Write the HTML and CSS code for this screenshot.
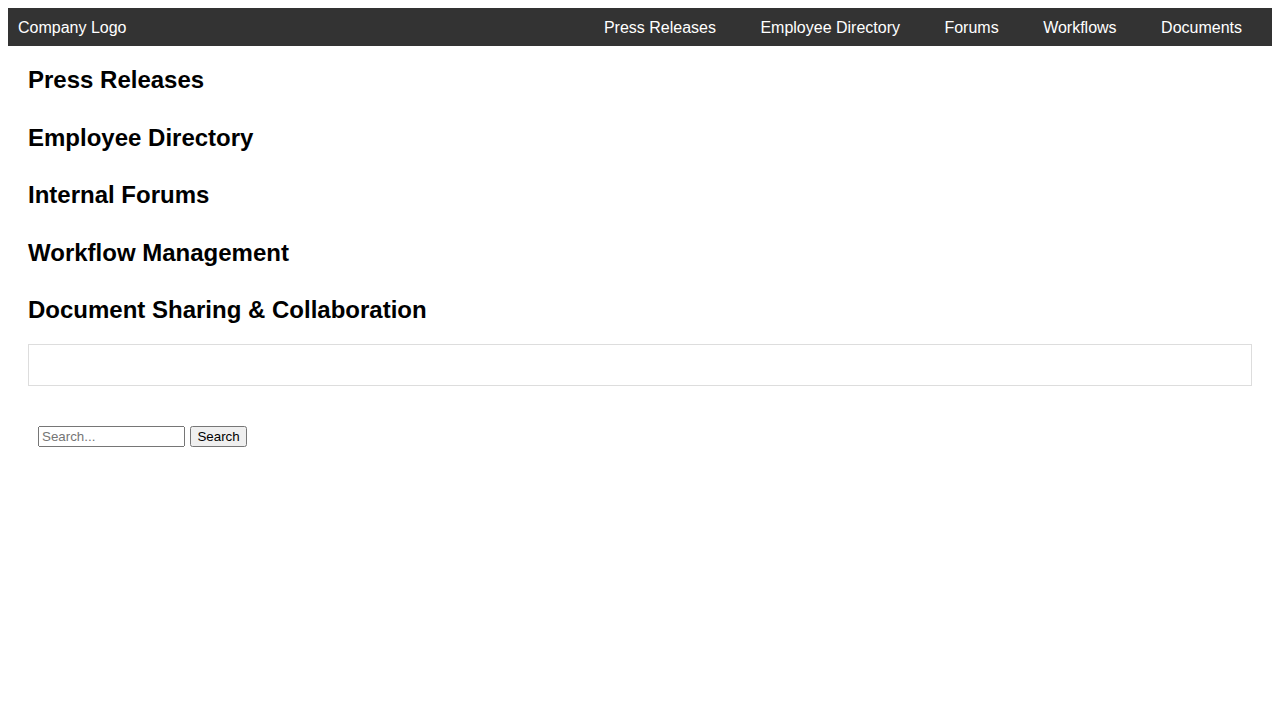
FILE: index.html
```html
<!DOCTYPE html>
<html lang="en">
<head>
<meta charset="utf-8">
<title>Intranet</title>
<link rel="stylesheet" href="styles.css">
</head>
<body>
<header class="topbar">
  <div class="logo">Company Logo</div>
  <nav class="nav">
    <a href="#press">Press Releases</a>
    <a href="#directory">Employee Directory</a>
    <a href="#forums">Forums</a>
    <a href="#workflows">Workflows</a>
    <a href="#documents">Documents</a>
  </nav>
</header>
<main class="content">
  <section class="section" id="press"><h2>Press Releases</h2></section>
  <section class="section" id="directory"><h2>Employee Directory</h2></section>
  <section class="section" id="forums"><h2>Internal Forums</h2></section>
  <section class="section" id="workflows"><h2>Workflow Management</h2></section>
  <section class="section" id="documents">
    <h2>Document Sharing &amp; Collaboration</h2>
    <div class="doc-box"></div>
  </section>
  <form class="search">
    <input type="text" placeholder="Search..."> <button type="submit">Search</button>
  </form>
</main>
</body>
</html>
```
FILE: styles.css
```css
body {
  margin: 8px;
  font-family: "Liberation Sans", Arial, sans-serif;
  color: #000;
  background: #fff;
}
.topbar {
  display: flex;
  justify-content: space-between;
  align-items: center;
  padding: 11px 10px 9px;
  background: #333;
  color: #fff;
  font-size: 16px;
  line-height: 18px;
  height: 18px;
}
.nav a {
  color: #fff;
  text-decoration: none;
  margin: 0 20px;
}
.content {
  padding: 0 20px;
}
.section {
  margin-bottom: 30px;
}
.section h2 {
  font-size: 24px;
  line-height: 27.6px;
  margin: 0.83em 0;
}
.doc-box {
  border: 1px solid #ddd;
  padding: 20px;
}
.search {
  padding: 10px;
}
.search input,
.search button {
  font-family: "Liberation Sans", Arial, sans-serif;
  font-size: 13.333px;
}
.search input {
  width: 147px;
  box-sizing: border-box;
  margin-right: 1px;
}
.search button {
  padding: 1px 5px;
}
```
